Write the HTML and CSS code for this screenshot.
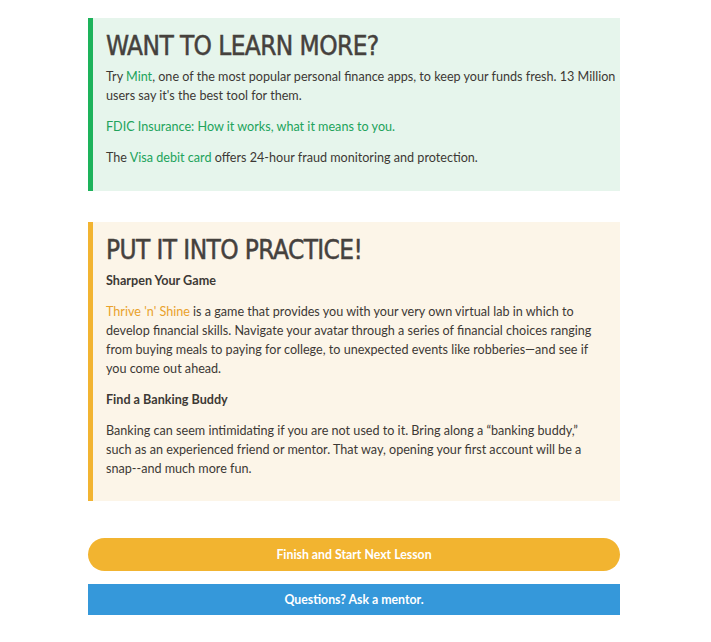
FILE: index.html
```html
<!DOCTYPE html>
<html>
<head>
<meta charset="utf-8">
<link rel="stylesheet" href="styles.css">
</head>
<body>
<div class="page">
  <section class="box box-green">
    <h2 class="box-title">WANT TO LEARN MORE?</h2>
    <p>Try <a class="lnk-green" href="#">Mint</a>, one of the most popular personal finance apps, to keep your funds fresh. 13 Million users say it's the best tool for them.</p>
    <p><a class="lnk-green" href="#">FDIC Insurance: How it works, what it means to you.</a></p>
    <p>The <a class="lnk-green" href="#">Visa debit card</a> offers 24-hour fraud monitoring and protection.</p>
  </section>

  <section class="box box-orange">
    <h2 class="box-title">PUT IT INTO PRACTICE!</h2>
    <p class="sub">Sharpen Your Game</p>
    <p><a class="lnk-orange" href="#">Thrive 'n' Shine</a> is a game that provides you with your very own virtual lab in which to develop financial skills. Navigate your avatar through a series of financial choices ranging from buying meals to paying for college, to unexpected events like robberies—and see if you come out ahead.</p>
    <p class="sub">Find a Banking Buddy</p>
    <p>Banking can seem intimidating if you are not used to it. Bring along a “banking buddy,” such as an experienced friend or mentor. That way, opening your first account will be a snap--and much more fun.</p>
  </section>

  <div class="actions">
    <a class="btn btn-next" href="#">Finish and Start Next Lesson</a>
    <a class="btn btn-mentor" href="#">Questions? Ask a mentor.</a>
  </div>
</div>
</body>
</html>
```

FILE: styles.css
```css
* { box-sizing: border-box; }
html, body { margin: 0; padding: 0; background: #ffffff; }
body {
  font-family: "Lato", "Open Sans", sans-serif;
  color: #3d3935;
  font-size: 12.6px;
  line-height: 19px;
}
.page {
  width: 532px;
  margin-left: 88px;
  padding-top: 18px;
}
.box {
  border-left: 5px solid;
  padding: 10px 4px 15px 13px;
}
.box-green { background: #e6f5ec; border-color: #1db35b; height: 173px; }
.box-orange {
  background: #fcf5e8;
  border-color: #f2b431;
  margin-top: 31px;
  height: 279px;
  padding-right: 20px;
}
.box-title {
  margin: 0 0 2px;
  font-family: "DejaVu Sans Condensed", "DejaVu Sans", sans-serif;
  font-weight: normal;
  font-size: 26px;
  line-height: 37px;
  letter-spacing: -0.6px;
  color: #45413d;
  -webkit-text-stroke: 0.45px #45413d;
}
.box p { margin: 0 0 12px; }
.box p.sub { font-weight: bold; margin-bottom: 12px; }
.lnk-green { color: #21a35b; text-decoration: none; }
.lnk-orange { color: #e9a22c; text-decoration: none; }
.actions {
  margin-top: 37px;
  display: flex;
  flex-direction: column;
  gap: 13px;
}
.btn {
  display: block;
  text-align: center;
  color: #ffffff;
  text-decoration: none;
  font-weight: bold;
  font-size: 12.3px;
}
.btn-next {
  background: #f2b430;
  border-radius: 17px;
  height: 33px;
  line-height: 33px;
}
.btn-mentor {
  background: #3598da;
  height: 31px;
  line-height: 31px;
}
```
